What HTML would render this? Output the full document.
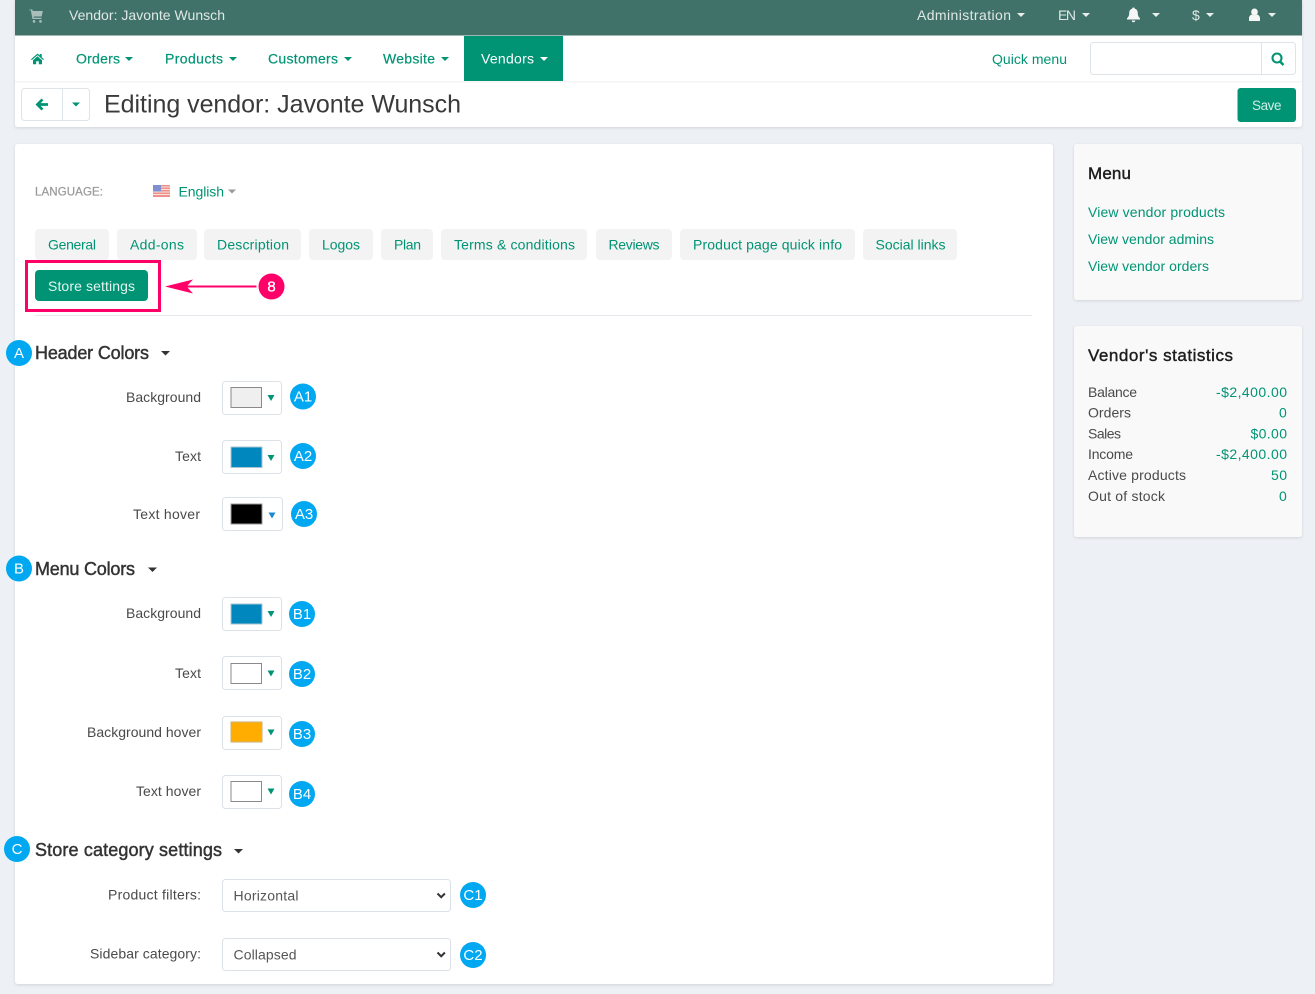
<!DOCTYPE html>
<html><head><meta charset="utf-8"><title>Editing vendor</title>
<style>
html,body{margin:0;padding:0;background:#edf1f5;width:1315px;height:994px;overflow:hidden}
svg{display:block;position:absolute;left:0;top:0}
text{font-family:"Liberation Sans",sans-serif;font-size:14px;white-space:pre}
.g{fill:#009474}.w{fill:#fff}.d{fill:#4a4a4a}.t{fill:#dfe8e6}
.m{stroke:#009474;stroke-width:.2}
.h{fill:#333;font-size:18px;stroke:#333;stroke-width:.45}
.c{fill:#fff;text-anchor:middle;font-size:15px}
.n{fill:#1c1c1c;font-size:17px;stroke:#1c1c1c;stroke-width:.4}
.b{fill:#00a7f1}.tab{fill:#f3f3f3}
.sw{fill:#fff;stroke:#dbe1e7}
</style></head><body>
<svg width="1315" height="994" viewBox="0 0 1315 994" xmlns="http://www.w3.org/2000/svg">
<defs><filter id="s" x="-5%" y="-5%" width="110%" height="110%"><feDropShadow dx="0" dy="1" stdDeviation="1.5" flood-color="#000" flood-opacity=".12"/></filter></defs>
<rect width="1315" height="994" fill="#edf1f5"/>

<!-- header -->
<rect x="15" y="0" width="1287" height="127" rx="3" fill="#fff" filter="url(#s)"/>
<rect x="15" y="0" width="1287" height="35.500" fill="#41726a"/>
<rect x="15" y="81" width="1287" height="1.500" fill="#f5f5f5"/>
<rect x="464" y="36" width="99" height="45" fill="#009474"/>

<path d="M29.500 9.500h2.800l.5 1.500h10l-1.200 5.500h-8l.3 1.200h7.600v1.300h-9l-1.700-8.700h-1.800zM34 20a1.400 1.400 0 1 0 .01 0zM40.500 20a1.400 1.400 0 1 0 .01 0z" fill="#a9bdb9"/>
<text x="69" y="20" class="t" textLength="156">Vendor: Javonte Wunsch</text>
<text x="917" y="20" class="t" textLength="94">Administration</text>
<path d="M1017 13h8l-4 4z" fill="#e8efed"/>
<text x="1058" y="20" class="t" textLength="18">EN</text>
<path d="M1082 13h8l-4 4z" fill="#e8efed"/>
<path d="M1133.500 7.500c.9 0 1.300.6 1.300 1.200 2.200.5 3 2.400 3 4.400 0 2.700.9 4 2.200 5.200v1.200h-13v-1.200c1.300-1.200 2.200-2.500 2.200-5.200 0-2 .8-3.900 3-4.400 0-.6.400-1.200 1.300-1.200zM1131.800 20.500h3.400a1.700 1.700 0 0 1-3.400 0z" fill="#f5f7f6"/>
<path d="M1152 13h8l-4 4z" fill="#e8efed"/>
<text x="1192" y="20" class="t" textLength="8">$</text>
<path d="M1206 13h8l-4 4z" fill="#e8efed"/>
<path d="M1254.500 8.500a3.300 3.500 0 1 1-.01 0zM1249 21v-2.700c0-2.100 1.500-3.500 3-3.800.8.700 1.600 1 2.500 1s1.700-.3 2.500-1c1.500.3 3 1.700 3 3.800v2.700z" fill="#f5f7f6"/>
<path d="M1268 13h8l-4 4z" fill="#e8efed"/>

<!-- nav -->
<path d="M31 59.300l6.500-5.800 2.200 2v-1.500h2v3.300l2.300 2-.8.800-5.700-5-5.700 5zM33 60.200l4.500-3.900 4.500 3.900v4h-3.200v-3h-2.600v3H33z" class="g"/>
<text x="76" y="63.500" class="g m" textLength="44">Orders</text><path d="M125 57h8l-4 4z" class="g"/>
<text x="165" y="63.500" class="g m" textLength="58">Products</text><path d="M229 57h8l-4 4z" class="g"/>
<text x="268" y="63.500" class="g m" textLength="70">Customers</text><path d="M344 57h8l-4 4z" class="g"/>
<text x="383" y="63.500" class="g m" textLength="52">Website</text><path d="M441 57h8l-4 4z" class="g"/>
<text x="481" y="63.500" class="w" textLength="53">Vendors</text><path d="M540 57h8l-4 4z" class="w"/>
<text x="992" y="64" class="g" textLength="75">Quick menu</text>
<rect x="1090.500" y="42.500" width="205" height="32" rx="3" fill="#fff" stroke="#dfe4e9"/>
<path d="M1261.500 43v31" stroke="#dfe4e9"/>
<circle cx="1277" cy="58" r="4.500" fill="none" stroke="#009474" stroke-width="2.100"/>
<path d="M1280 61.500l3.500 3.500" stroke="#009474" stroke-width="2.500"/>

<!-- toolbar -->
<rect x="21.500" y="88.500" width="68" height="32" rx="3" fill="#fff" stroke="#dfe4e9"/>
<path d="M62.500 89v31" stroke="#dfe4e9"/>
<path d="M35.500 104.500l6-6 1.900 1.900-2.700 2.700h7.300v2.800h-7.300l2.700 2.700-1.900 1.900z" class="g"/>
<path d="M72 102.500h8l-4 4z" class="g"/>
<text x="104" y="112.500" style="font-size:25px" fill="#3a3a3a" textLength="357">Editing vendor: Javonte Wunsch</text>
<rect x="1237.500" y="88" width="58.500" height="34" rx="3" fill="#009474"/>
<text x="1252" y="110" fill="#cfeee6" style="font-size:13.500px" textLength="29.500">Save</text>

<!-- main card -->
<rect x="15" y="144" width="1038" height="840" rx="3" fill="#fff" filter="url(#s)"/>
<text x="35" y="195.500" fill="#9a9a9a" stroke="#9a9a9a" stroke-width=".25" style="font-size:11.500px" textLength="68">LANGUAGE:</text>
<rect x="153" y="185" width="17" height="12" fill="#ef8f87"/>
<path d="M153 187h17M153 189.500h17M153 192h17M153 194.500h17" stroke="#f7e3e0" stroke-width="1"/>
<rect x="153" y="185" width="8" height="6.500" fill="#7f8fd0"/>
<text x="178.500" y="196.500" class="g" textLength="45.500">English</text>
<path d="M228 189.500h8l-4 4z" fill="#9a9a9a"/>

<g class="tab">
<rect x="35" y="229" width="74" height="31" rx="4"/>
<rect x="117" y="229" width="80" height="31" rx="4"/>
<rect x="204" y="229" width="97" height="31" rx="4"/>
<rect x="309" y="229" width="64" height="31" rx="4"/>
<rect x="381" y="229" width="52" height="31" rx="4"/>
<rect x="441" y="229" width="146" height="31" rx="4"/>
<rect x="596" y="229" width="76" height="31" rx="4"/>
<rect x="680" y="229" width="175" height="31" rx="4"/>
<rect x="863" y="229" width="94" height="31" rx="4"/>
</g>
<text x="48" y="249.500" class="g" textLength="48">General</text>
<text x="130" y="249.500" class="g" textLength="54">Add-ons</text>
<text x="217" y="249.500" class="g" textLength="72">Description</text>
<text x="322" y="249.500" class="g" textLength="38">Logos</text>
<text x="394" y="249.500" class="g" textLength="27">Plan</text>
<text x="454" y="249.500" class="g" textLength="121">Terms &amp; conditions</text>
<text x="608.500" y="249.500" class="g" textLength="51">Reviews</text>
<text x="693" y="249.500" class="g" textLength="149">Product page quick info</text>
<text x="875.500" y="249.500" class="g" textLength="70">Social links</text>
<rect x="35" y="270" width="113" height="31" rx="4" fill="#009474"/>
<text x="48" y="291" fill="#e3f5f0" textLength="87">Store settings</text>
<rect x="26.500" y="261.500" width="133" height="49" fill="none" stroke="#ff0069" stroke-width="3"/>
<path d="M165 286.500l28-7-5.500 6h69v2h-69l5.500 6z" fill="#ff0069"/>
<circle cx="271.500" cy="286.500" r="13" fill="#ff0069"/>
<text x="271.500" y="291.500" class="c" stroke="#fff" stroke-width=".3">8</text>
<rect x="35" y="315" width="997" height="1" fill="#e4e8ed"/>

<!-- A -->
<text x="35" y="359" class="h" textLength="114">Header Colors</text>
<path d="M161 351h9l-4.500 4.500z" fill="#333"/>
<circle cx="19" cy="353" r="13" class="b"/><text x="19" y="358" class="c">A</text>

<text x="126" y="402" class="d" textLength="75">Background</text>
<rect x="222.500" y="381.500" width="59" height="33" rx="3" class="sw"/>
<rect x="231" y="387.500" width="30.500" height="20" fill="#efefef" stroke="#8a8a8a"/>
<path d="M267.500 395h7l-3.500 6z" class="g"/>
<circle cx="303" cy="396.500" r="13" class="b"/><text x="303" y="401.500" class="c">A1</text>

<text x="175" y="461" class="d" textLength="26">Text</text>
<rect x="222.500" y="440.500" width="59" height="33" rx="3" class="sw"/>
<rect x="231" y="447" width="31" height="20.500" fill="#0087bd" stroke="#a9c4cf"/>
<path d="M267.500 455h7l-3.500 6z" class="g"/>
<circle cx="303" cy="456" r="13" class="b"/><text x="303" y="461" class="c">A2</text>

<text x="133" y="519" class="d" textLength="67">Text hover</text>
<rect x="222.500" y="497.500" width="60" height="33" rx="3" class="sw"/>
<rect x="231" y="504" width="31" height="20" fill="#000" stroke="#999"/>
<path d="M268.500 512.500h7l-3.500 6z" fill="#1b88d0"/>
<circle cx="304" cy="514" r="13" class="b"/><text x="304" y="519" class="c">A3</text>

<!-- B -->
<text x="35" y="575" class="h" textLength="100">Menu Colors</text>
<path d="M148 567.500h9l-4.500 4.500z" fill="#333"/>
<circle cx="19" cy="568.500" r="13" class="b"/><text x="19" y="573.500" class="c">B</text>

<text x="126" y="618" class="d" textLength="75">Background</text>
<rect x="222.500" y="597.500" width="59" height="33" rx="3" class="sw"/>
<rect x="231" y="604" width="31" height="20" fill="#0087bd" stroke="#a9c4cf"/>
<path d="M267.500 611h7l-3.500 6z" class="g"/>
<circle cx="302" cy="614" r="13" class="b"/><text x="302" y="619" class="c">B1</text>

<text x="175" y="678" class="d" textLength="26">Text</text>
<rect x="222.500" y="656.500" width="59" height="33" rx="3" class="sw"/>
<rect x="231" y="663.500" width="30.500" height="20" fill="#fff" stroke="#8a8a8a"/>
<path d="M267.500 670.500h7l-3.500 6z" class="g"/>
<circle cx="302" cy="674" r="13" class="b"/><text x="302" y="679" class="c">B2</text>

<text x="87" y="737" class="d" textLength="114">Background hover</text>
<rect x="222.500" y="716.500" width="59" height="33" rx="3" class="sw"/>
<rect x="231" y="722" width="31" height="20" fill="#ffad00" stroke="#c9b27a"/>
<path d="M267.500 729.500h7l-3.500 6z" class="g"/>
<circle cx="302" cy="734" r="13" class="b"/><text x="302" y="739" class="c">B3</text>

<text x="136" y="796" class="d" textLength="65">Text hover</text>
<rect x="222.500" y="775.500" width="59" height="33" rx="3" class="sw"/>
<rect x="231" y="781.500" width="30.500" height="20" fill="#fff" stroke="#8a8a8a"/>
<path d="M267.500 788.500h7l-3.500 6z" class="g"/>
<circle cx="302" cy="794" r="13" class="b"/><text x="302" y="799" class="c">B4</text>

<!-- C -->
<text x="35" y="856" class="h" textLength="187">Store category settings</text>
<path d="M234 849h9l-4.500 4.500z" fill="#333"/>
<circle cx="17" cy="849" r="13" class="b"/><text x="17" y="854" class="c">C</text>

<text x="108" y="899.500" class="d" textLength="93">Product filters:</text>
<rect x="222.500" y="879.500" width="228" height="32" rx="3" class="sw"/>
<text x="233.500" y="900.500" fill="#555" textLength="65">Horizontal</text>
<path d="M437.500 893.500l3.700 3.700 3.700-3.700" fill="none" stroke="#333" stroke-width="2"/>
<circle cx="473" cy="895" r="13" class="b"/><text x="473" y="900" class="c">C1</text>

<text x="90" y="958.500" class="d" textLength="111">Sidebar category:</text>
<rect x="222.500" y="938.500" width="228" height="32" rx="3" class="sw"/>
<text x="233.500" y="959.500" fill="#555" textLength="63">Collapsed</text>
<path d="M437.500 952.500l3.700 3.700 3.700-3.700" fill="none" stroke="#333" stroke-width="2"/>
<circle cx="473" cy="955" r="13" class="b"/><text x="473" y="960" class="c">C2</text>

<!-- sidebar -->
<rect x="1074" y="144" width="228" height="156" rx="3" fill="#f9f9f9" filter="url(#s)"/>
<text x="1088" y="179" class="n" textLength="43">Menu</text>
<text x="1088" y="217" class="g" textLength="137">View vendor products</text>
<text x="1088" y="244" class="g" textLength="126">View vendor admins</text>
<text x="1088" y="271" class="g" textLength="121">View vendor orders</text>

<rect x="1074" y="326" width="228" height="211" rx="3" fill="#f9f9f9" filter="url(#s)"/>
<text x="1088" y="361" class="n" textLength="145">Vendor's statistics</text>
<text x="1088" y="397" class="d" textLength="49">Balance</text>
<text x="1088" y="417.500" class="d" textLength="43">Orders</text>
<text x="1088" y="438.500" class="d" textLength="33">Sales</text>
<text x="1088" y="459" class="d" textLength="45">Income</text>
<text x="1088" y="480" class="d" textLength="98">Active products</text>
<text x="1088" y="501" class="d" textLength="77">Out of stock</text>
<text x="1216" y="397" class="g" textLength="71">-$2,400.00</text>
<text x="1279" y="417.500" class="g" textLength="8">0</text>
<text x="1250.500" y="438.500" class="g" textLength="36.500">$0.00</text>
<text x="1216" y="459" class="g" textLength="71">-$2,400.00</text>
<text x="1271" y="480" class="g" textLength="16">50</text>
<text x="1279" y="501" class="g" textLength="8">0</text>
</svg>
</body></html>
